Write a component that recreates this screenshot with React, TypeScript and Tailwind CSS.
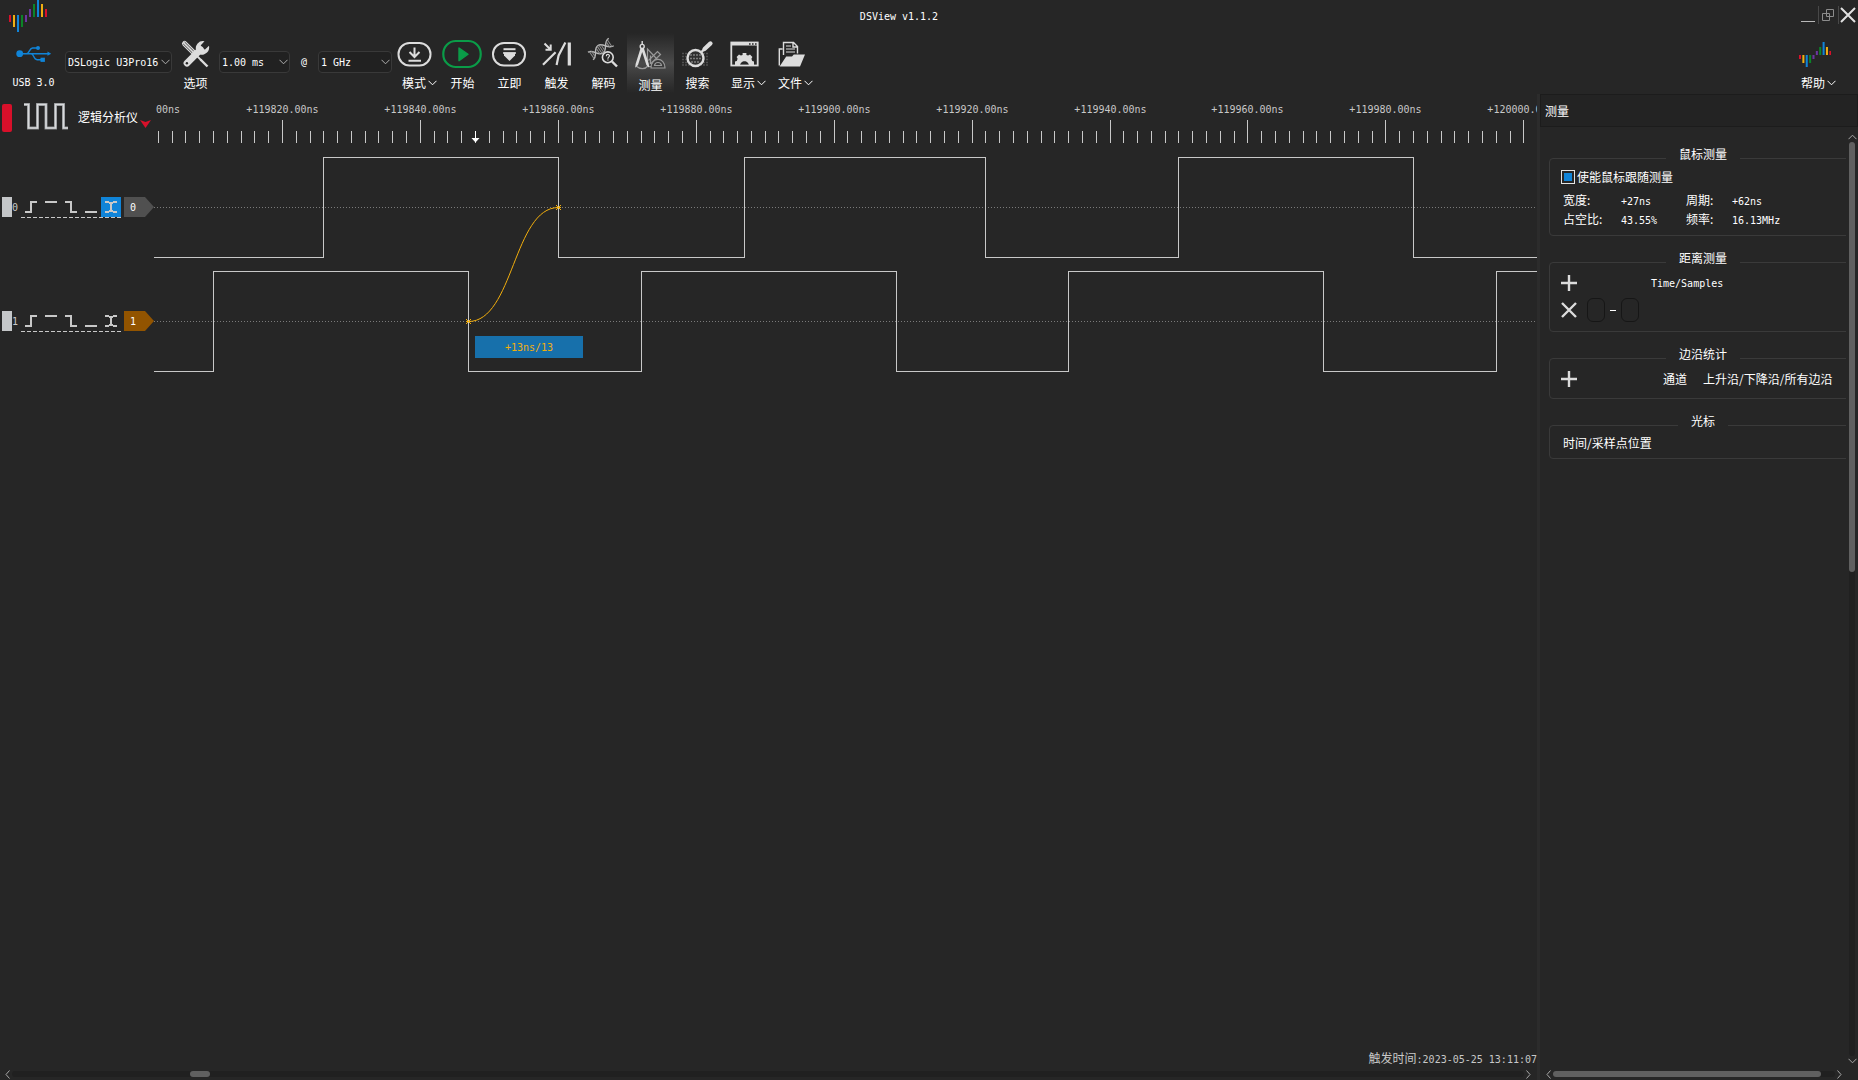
import { useState, type ReactNode } from 'react'

const mono = "font-['DejaVu_Sans_Mono','Noto_Sans_CJK_SC',monospace] text-[10px]"
const cjk = "font-['Noto_Sans_CJK_SC',sans-serif] text-xs"

// ---------- timing data ----------

const PX_PER_NS = 6.8966
const T0 = 119800
const ORIGIN = -9.5 // x of T0 on the canvas

const timeToX = (t: number) => Math.floor(ORIGIN + (t - T0) * PX_PER_NS) + 0.5

interface Channel {
  id: number
  edges: number[]
  top: number
  trigger: number | null
  tag: string
}

const channels: Channel[] = [
  { id: 0, edges: [119826, 119860, 119887, 119922, 119950, 119984], top: 63, trigger: 4, tag: 'fill-[#505050]' },
  { id: 1, edges: [119810, 119847, 119872, 119909, 119934, 119971, 119996], top: 177, trigger: null, tag: 'fill-[#925400]' },
]

const triggerModes = [
  { name: 'Rising edge', d: 'M4 15H10V5H16' },
  { name: 'High level', d: 'M4 5H16' },
  { name: 'Falling edge', d: 'M4 5H10V15H16' },
  { name: 'Low level', d: 'M4 15H16' },
  { name: 'Any edge', d: 'M4 5H8M12 5H16M4 15H8M12 15H16M8 6H12M8 14H12M10 5V15' },
]

function wavePath(channel: Channel) {
  const high = channel.top + 0.5
  const low = channel.top + 100.5
  let level = low
  let d = `M0 ${level}`
  for (const t of channel.edges) {
    level = level === low ? high : low
    d += `H${timeToX(t)}V${level}`
  }
  return d + 'H4000'
}

// ---------- icons ----------

function Logo({ width, height }: { width: number; height: number }) {
  const bars = [
    ['#d8102a', 15, 7], ['#f0ae12', 15, 12], ['#1084d8', 15, 17], ['#0b8428', 15, 12], ['#6c35a0', 15, 7],
    ['#6c35a0', 9, 8], ['#0b8428', 4, 13], ['#1084d8', 0, 17], ['#f0ae12', 4, 13], ['#d8102a', 9, 8],
  ] as const
  return (
    <svg width={width} height={height} viewBox="0 0 38 32" preserveAspectRatio="none" aria-hidden="true">
      {bars.map(([fill, y, h], i) => (
        <rect key={i} x={i * 4} y={y} width="2" height={h} fill={fill} />
      ))}
    </svg>
  )
}

// the toolbar copy is flatter: both halves meet on one base line
function SmallLogo() {
  const bars = [
    ['#d8102a', 13, 4], ['#f0ae12', 13, 8], ['#1084d8', 13, 12], ['#0b8428', 13, 8], ['#6c35a0', 13, 4],
    ['#6c35a0', 9, 4], ['#0b8428', 5, 8], ['#1084d8', 0, 13], ['#f0ae12', 5, 8], ['#d8102a', 9, 4],
  ] as const
  return (
    <svg width="32" height="25" viewBox="0 0 38 25" preserveAspectRatio="none" aria-hidden="true">
      {bars.map(([fill, y, h], i) => (
        <rect key={i} x={i * 4} y={y} width="2.4" height={h} fill={fill} />
      ))}
    </svg>
  )
}

function Chevron({ className = '' }: { className?: string }) {
  return (
    <svg width="9" height="6" viewBox="0 0 9 6" fill="none" stroke="currentColor" className={className} aria-hidden="true">
      <path d="M0.5 0.8L4.5 4.8L8.5 0.8" />
    </svg>
  )
}

function Icon({ children }: { children: ReactNode }) {
  return (
    <svg width="41" height="36" viewBox="0 0 41 36" fill="none" stroke="#dcdcdc" strokeWidth="2" className="shrink-0" aria-hidden="true">
      {children}
    </svg>
  )
}

const UsbIcon = () => (
  <Icon>
    <g stroke="#1084d8" strokeWidth="1.4">
      <path d="M7 17.7H35M13.5 17.7C16.5 17.7 16 12.5 19.5 12H25M18 17.7C21 17.7 20.5 23.7 24 23.7H28" />
      <g fill="#1084d8" stroke="none">
        <circle cx="6.7" cy="17.7" r="3.4" />
        <circle cx="25" cy="12" r="2" />
        <rect x="27.5" y="21.7" width="4.4" height="4.2" />
        <path d="M34.5 15.6L38.2 17.7L34.5 19.8Z" />
      </g>
    </g>
  </Icon>
)

const ToolsIcon = () => (
  <Icon>
    <path d="M9.6 7.6L18.2 16.2" strokeWidth="5.2" strokeLinecap="round" />
    <path d="M9.6 6L18.8 15.2M8.2 7.9L17.6 17.2" stroke="#262626" strokeWidth="0.8" />
    <path d="M18 16L26.5 24.5" strokeWidth="1.8" />
    <path d="M25.5 23.5L32.5 30.5" strokeWidth="2.4" />
    <path d="M12 27.2L25.5 13.7" strokeWidth="6.8" strokeLinecap="round" />
    <path d="M29.5 5.2A7.2 7.2 0 0 0 21.2 14.6L25.2 18.4A7.2 7.2 0 0 0 34 9.8L30 13.4L26.6 12.6L25.8 9.2Z" fill="#dcdcdc" stroke="none" />
    <circle cx="11.9" cy="27.3" r="1.2" fill="#262626" stroke="none" />
  </Icon>
)

const ModeIcon = () => (
  <Icon>
    <rect x="3.5" y="7" width="32" height="22.5" rx="11" />
    <path d="M19.5 11.5V20M14.5 16L19.5 21L24.5 16M13.5 24.7H26" />
  </Icon>
)

const StartIcon = () => (
  <Icon>
    <rect x="1.3" y="5" width="37.4" height="26" rx="12.5" stroke="#0a9c48" strokeWidth="2.2" />
    <path d="M17 12L26 18.3L17 24.7Z" fill="#0a9c48" stroke="#0a9c48" strokeLinejoin="round" strokeWidth="1.4" />
  </Icon>
)

const InstantIcon = () => (
  <Icon>
    <rect x="4" y="7" width="32" height="22.5" rx="11" />
    <path d="M14.5 13.2H26.5" />
    <path d="M15 16.5H26V19.5L20.5 25L15 19.5Z" fill="#dcdcdc" stroke="none" />
    <path d="M14 17H27" strokeWidth="1.6" />
  </Icon>
)

const TriggerIcon = () => (
  <Icon>
    <path d="M8.5 7.5L14 13M14.7 8.5V13.7H9.5" />
    <path d="M7 28.7L19.6 16.2M20.6 29L22.6 19.5L29.4 6.5" strokeWidth="2.2" />
    <path d="M33.3 6.5V29.5" strokeWidth="3.2" />
  </Icon>
)

const DecodeIcon = () => (
  <Icon>
    <g transform="translate(7.5 20) rotate(-34)" stroke="#b8b8b8" strokeWidth="1.4">
      <path d="M0 -4.5C6 -4.5 6 4.5 12 4.5S18 -4.5 25 -4.5M0 4.5C6 4.5 6 -4.5 12 -4.5S18 4.5 25 4.5" />
      <path d="M1.5 -4.5V4.5M3.5 -3.5V3.5M9 -3.5V3.5M11 -4.5V4.5M13 -4.5V4.5M15 -3.5V3.5M21 -3.5V3.5M23 -4V4" stroke="#8c8c8c" strokeWidth="1" />
    </g>
    <circle cx="24.8" cy="21.3" r="5.4" fill="#262626" strokeWidth="1.6" />
    <path d="M29 25.5L34 30.5" strokeWidth="2.4" />
    <path d="M23.3 20.3C23.3 17.7 26.6 18 26.4 20C26.2 21.2 24.9 21.3 24.9 22.7M24.9 23.6V24.6" strokeWidth="1.2" />
  </Icon>
)

const MeasureIcon = () => (
  <Icon>
    <g stroke="#9a9a9a" strokeWidth="1.2">
      <path d="M17.5 12L17.5 29.5H34L17.5 12ZM20.5 18.5V26.5H26" />
      <path d="M18.5 23.5L27.5 14.5L30.5 17.5L21 26.5" />
      <path d="M21 31C21 19.5 35 19.5 35 31ZM24.5 28.5C25 24.5 31 24.5 31.5 28.5Z" fill="#3a3a3a" />
      <path d="M6 29C10 32.5 15 32.5 18 29" />
    </g>
    <path d="M12.2 4V8" strokeWidth="1.4" />
    <circle cx="12.2" cy="9.4" r="2" strokeWidth="1.4" />
    <path d="M10.6 11L5.6 27L5.2 30.8L8 28L12.2 15L16.4 28L19.2 30.8L18.8 27L13.8 11Z" fill="#dcdcdc" stroke="none" />
  </Icon>
)

const SearchIcon = () => (
  <Icon>
    <path d="M5 17.5H32M5 20.5H32M5 23.5H32M5 26.5H32M5 29H32" stroke="#505050" strokeWidth="1.6" strokeDasharray="2 1" />
    <circle cx="18.5" cy="22" r="8" fill="#303030" strokeWidth="2.4" />
    <path d="M13 19H24M13 22.5H24M14 26H23" stroke="#7c7c7c" strokeWidth="1.6" strokeDasharray="2 1" />
    <path d="M24.5 16L28 12.5" strokeWidth="2.4" />
    <path d="M27.5 13L33.5 7.4" strokeWidth="4.2" strokeLinecap="round" />
  </Icon>
)

const DisplayIcon = () => (
  <Icon>
    <rect x="7.3" y="6.5" width="26.4" height="23" strokeWidth="1.8" />
    <path d="M7 7.8H34" strokeWidth="3.4" />
    <path d="M25 8H26.6M28 8H29.6M31 8H32.6" stroke="#262626" strokeWidth="1.6" />
    <path d="M11 30V25.5L12.8 25L13.6 22.8L12.6 21L15 18.6L16.9 19.6L18.6 19V17H22.4V19L24.1 19.6L26 18.6L28.4 21L27.4 22.8L28.2 25L30 25.5V30H25C25 23.5 16 23.5 16 30Z" fill="#dcdcdc" stroke="none" />
  </Icon>
)

const FileIcon = () => (
  <Icon>
    <path d="M11.5 13H8.3V29.5M12.5 19V6.5H22.5L26.5 10.5V17.5M22 6.8V11H26.3" strokeWidth="1.4" />
    <path d="M15 10H20M15 13H24M15 16H24" strokeWidth="1.2" />
    <path d="M8.6 30.5L15.2 20.5H21L22.8 18.5H34L29 30.5Z" fill="#dcdcdc" stroke="none" />
  </Icon>
)

// ---------- toolbar ----------

interface ToolProps {
  label: string
  icon: ReactNode
  menu?: boolean
  active?: boolean
}

function ToolButton({ label, icon, menu, active }: ToolProps) {
  return (
    <button
      type="button"
      aria-pressed={active}
      className={`flex h-15 w-[47px] shrink-0 flex-col items-center ${
        active ? 'gap-1 bg-linear-to-b from-[#262626] via-[#4a4a4a] to-[#262626] pt-1' : 'gap-[3px] pt-[3px]'
      }`}
    >
      {icon}
      <span className={`flex h-4 items-center gap-0.5 leading-4 whitespace-nowrap ${cjk} ${menu ? 'pl-2' : ''}`}>
        {label}
        {menu && <Chevron />}
      </span>
    </button>
  )
}

function Picker({ label, options, className }: { label: string; options: string[]; className: string }) {
  return (
    <div className={`relative mt-[18px] shrink-0 ${className}`}>
      <select
        aria-label={label}
        className={`block h-[22px] w-full appearance-none rounded-sm border border-[#393939] bg-[#212121] pl-0.5 text-white ${mono}`}
      >
        {options.map((option) => (
          <option key={option}>{option}</option>
        ))}
      </select>
      <Chevron className="pointer-events-none absolute top-2 right-0.5 text-[#b0b0b0]" />
    </div>
  )
}

function TitleBar() {
  return (
    <header className="flex h-8 shrink-0">
      <div className="w-12 pl-[9px]">
        <Logo width={38} height={32} />
      </div>
      <h1 className={`flex-1 text-center leading-[34px] ${mono}`}>DSView v1.1.2</h1>
      <div className="flex w-[108px] justify-end">
        <button type="button" aria-label="Minimize" className="flex h-8 w-[17px] pt-[21px]">
          <span className="h-px w-3.5 bg-[#b8b8b8]" />
        </button>
        <span className="mt-1.5 h-[18px] w-px bg-[#484848]" />
        <button type="button" aria-label="Restore" className="flex h-8 w-[19px] pt-[9px] pl-[3px]">
          <svg width="12" height="12" fill="none" stroke="#8c8c8c" aria-hidden="true">
            <path d="M4.5 0.5H11.5V7.5H4.5ZM0.5 4.5H7.5V11.5H0.5Z" />
          </svg>
        </button>
        <span className="mt-1.5 h-[18px] w-px bg-[#484848]" />
        <button type="button" aria-label="Close" className="flex h-8 w-[19px] pt-[7px] pl-px">
          <svg width="16" height="16" fill="none" stroke="#e0e0e0" strokeWidth="2" aria-hidden="true">
            <path d="M1 1L15 15M15 1L1 15" />
          </svg>
        </button>
      </div>
    </header>
  )
}

function Toolbar() {
  return (
    <nav className="flex h-[62px] shrink-0 items-start pt-px">
      <button type="button" className="flex h-15 w-[65px] shrink-0 flex-col items-center gap-[3px] pt-[3px] pl-0.5">
        <UsbIcon />
        <span className={`h-4 leading-4 ${mono}`}>USB 3.0</span>
      </button>
      <Picker label="Device" options={['DSLogic U3Pro16']} className="w-[107px]" />
      <ToolButton label="选项" icon={<ToolsIcon />} />
      <Picker label="Duration" options={['1.00 ms']} className="w-[71px]" />
      <span className={`mt-[18px] w-7 shrink-0 text-center leading-[22px] ${mono}`}>@</span>
      <Picker label="Sample rate" options={['1 GHz']} className="w-[74px]" />
      <ToolButton label="模式" icon={<ModeIcon />} menu />
      <ToolButton label="开始" icon={<StartIcon />} />
      <ToolButton label="立即" icon={<InstantIcon />} />
      <ToolButton label="触发" icon={<TriggerIcon />} />
      <ToolButton label="解码" icon={<DecodeIcon />} />
      <ToolButton label="测量" icon={<MeasureIcon />} active />
      <ToolButton label="搜索" icon={<SearchIcon />} />
      <ToolButton label="显示" icon={<DisplayIcon />} menu />
      <ToolButton label="文件" icon={<FileIcon />} menu />
      <div className="mr-5 ml-auto">
        <ToolButton
          label="帮助"
          icon={
            <span className="flex h-9 items-center">
              <SmallLogo />
            </span>
          }
          menu
        />
      </div>
    </nav>
  )
}

// ---------- waveform view ----------

function ChannelRow({ channel }: { channel: Channel }) {
  const [trigger, setTrigger] = useState(channel.trigger)

  return (
    <div className="flex h-[114px] items-center text-[#c8c8c8]">
      <span className="ml-0.5 h-5 w-2.5 bg-[#c4c6c8]" />
      <span className={`w-[9px] ${mono}`}>{channel.id}</span>
      <div className="relative flex">
        {triggerModes.map((mode, i) => (
          <button
            key={mode.name}
            type="button"
            aria-label={mode.name}
            aria-pressed={trigger === i}
            onClick={() => setTrigger(trigger === i ? null : i)}
            className={trigger === i ? 'bg-[#1084d8]' : ''}
          >
            <svg width="20" height="20" fill="none" stroke="currentColor" strokeWidth="2" aria-hidden="true">
              <path d={mode.d} />
            </svg>
          </button>
        ))}
        <svg className="absolute top-full left-0 h-px w-full" aria-hidden="true">
          <path d="M0 0.5H100" stroke="#c8c8c8" strokeDasharray="4 2" />
        </svg>
      </div>
      <svg width="30" height="20" className="ml-[3px]">
        <path d="M0 0H21L30 10L21 20H0Z" className={channel.tag} />
        <text x="9" y="14" textAnchor="middle" className={`fill-white ${mono}`}>
          {channel.id}
        </text>
      </svg>
    </div>
  )
}

function DeviceColumn() {
  return (
    <div className="w-[154px] shrink-0">
      <div className="flex h-14 items-start">
        <span className="mt-2.5 ml-0.5 h-7 w-2.5 rounded-xs bg-[#d8102a]" />
        <svg width="44" height="27" className="mt-[9px] ml-3" fill="none" aria-hidden="true">
          <path d="M0 1.5H4.5V25H13.5V1.5H22V25H31.5V1.5H39.5V25H44" stroke="#8c8e90" strokeWidth="3" />
          <path d="M0 1.5H4.5V25H13.5V1.5H22V25H31.5V1.5H39.5V25H44" stroke="#d8dadc" strokeWidth="1.6" />
        </svg>
        <span className={`mt-[15px] ml-2.5 leading-4 whitespace-nowrap ${cjk}`}>逻辑分析仪</span>
        <svg width="11" height="8" className="mt-[26px] ml-0.5" fill="#d8102a" aria-hidden="true">
          <path d="M0 0L5.5 2L11 0L5.5 8Z" />
        </svg>
      </div>
      {channels.map((channel) => (
        <ChannelRow key={channel.id} channel={channel} />
      ))}
    </div>
  )
}

function WaveCanvas() {
  const ticks = Array.from({ length: 160 }, (_, i) => T0 + 2 + i * 2)
  const labels = Array.from({ length: 10 }, (_, i) => T0 + 20 + i * 20)
  const from = { x: timeToX(119847), y: 227.5 }
  const to = { x: timeToX(119860), y: 113.5 }
  const mid = (from.x + to.x) / 2
  const cross = (x: number, y: number) => `M${x - 2.5} ${y - 2.5}l5 5M${x + 2.5} ${y - 2.5}l-5 5M${x - 2.5} ${y}h5`
  const labelClass = `fill-[#c8c8c8] ${mono}`

  return (
    <svg className="h-full min-w-0 flex-1" fill="none" stroke="#c8c8c8" aria-label="Waveforms">
      {ticks.map((t) => (
        <path key={t} d={`M${timeToX(t)} ${t % 20 === 0 ? 26 : 37}V49`} />
      ))}
      {/* only the tail of the first label fits */}
      <text x="2" y="19" stroke="none" className={labelClass}>
        00ns
      </text>
      {labels.map((t) => (
        <text key={t} x={timeToX(t)} y="19" textAnchor="middle" stroke="none" className={labelClass}>
          +{t}.00ns
        </text>
      ))}
      {/* hover cursor on the ruler */}
      <path d="M321.5 37V45" stroke="#fff" />
      <path d="M317.5 44H325.5L321.5 48.5Z" fill="#fff" stroke="none" />

      {channels.map((channel) => (
        <g key={channel.id} shapeRendering="crispEdges">
          <path d={`M0 ${channel.top + 50.5}H4000`} stroke="#7a7a7a" strokeDasharray="1 2" />
          <path d={wavePath(channel)} />
        </g>
      ))}

      <g stroke="#f2ae0d">
        <path d={`M${from.x} ${from.y}C${mid} ${from.y} ${mid} ${to.y} ${to.x} ${to.y}`} />
        <path d={cross(from.x, from.y)} />
        <path d={cross(to.x, to.y)} />
      </g>
      <rect x="321" y="242" width="108" height="22" fill="#1770ab" stroke="none" />
      <text x="375" y="257" textAnchor="middle" stroke="none" className={`fill-[#f2ae0d] ${mono}`}>
        +13ns/13
      </text>
    </svg>
  )
}

function HorizontalScroll({ thumb }: { thumb: string }) {
  return (
    <div className="flex h-3 shrink-0 items-center gap-0.5 text-[#a8a8a8]">
      <Arrow d="M4.5 0.5L1 4.5L4.5 8.5" />
      <div className="h-1.5 flex-1 rounded-full bg-[#202020]">
        <div className={`h-1.5 rounded-full bg-[#606060] ${thumb}`} />
      </div>
      <Arrow d="M0.5 0.5L4 4.5L0.5 8.5" />
    </div>
  )
}

function Arrow({ d }: { d: string }) {
  return (
    <svg width="5" height="9" fill="none" stroke="currentColor" aria-hidden="true">
      <path d={d} />
    </svg>
  )
}

// ---------- measure panel ----------

function Group({ title, className = '', children }: { title: string; className?: string; children: ReactNode }) {
  return (
    <fieldset className={`w-[308px] rounded-sm border border-[#3a3a3a] px-[11px] ${className}`}>
      <legend className={`mx-auto px-[13px] pb-2 leading-4 ${cjk}`}>{title}</legend>
      {children}
    </fieldset>
  )
}

function IconButton({ label, d }: { label: string; d: string }) {
  return (
    <button type="button" aria-label={label} className="mr-2.5">
      <svg width="16" height="16" fill="none" stroke="#dcdcdc" strokeWidth="2.4" aria-hidden="true">
        <path d={d} />
      </svg>
    </button>
  )
}

const PLUS = 'M0 8H16M8 0V16'
const CROSS = 'M1 1L15 15M15 1L1 15'

function MeasurePanel() {
  const [follow, setFollow] = useState(true)
  const slot = 'h-6 w-[18px] rounded-md border border-[#161616]'

  return (
    <aside className="flex w-[318px] shrink-0 flex-col">
      <h2 className={`h-[33px] shrink-0 border border-[#1c1c1c] bg-[#232323] pl-1 leading-8 ${cjk}`}>测量</h2>
      <div className="flex min-h-0 flex-1">
        <div className="flex min-w-0 flex-1 flex-col gap-3.5 overflow-hidden pt-[19px] pl-[9px]">
          <Group title="鼠标测量" className="pb-[5px]">
            <label className={`flex h-3.5 items-center gap-0.5 ${cjk}`}>
              <input
                type="checkbox"
                checked={follow}
                onChange={(e) => setFollow(e.target.checked)}
                className="size-3.5 appearance-none border border-[#e4e4e4] bg-clip-content p-0.5 checked:bg-[#1084d8]"
              />
              使能鼠标跟随测量
            </label>
            <dl className="mt-2 grid grid-cols-[58px_65px_46px_1fr] pl-0.5 leading-[19px]">
              <dt className={cjk}>宽度:</dt>
              <dd className={mono}>+27ns</dd>
              <dt className={cjk}>周期:</dt>
              <dd className={mono}>+62ns</dd>
              <dt className={cjk}>占空比:</dt>
              <dd className={mono}>43.55%</dd>
              <dt className={cjk}>频率:</dt>
              <dd className={mono}>16.13MHz</dd>
            </dl>
          </Group>

          <Group title="距离测量" className="pb-[9px]">
            <div className="flex h-[18px] items-center">
              <IconButton label="Add distance" d={PLUS} />
              <span className={`ml-16 ${mono}`}>Time/Samples</span>
            </div>
            <div className="mt-1.5 flex h-6 items-center">
              <IconButton label="Remove distance" d={CROSS} />
              <button type="button" aria-label="Start cursor" className={slot} />
              <span className="mx-[5px] h-px w-1.5 bg-white" />
              <button type="button" aria-label="End cursor" className={slot} />
            </div>
          </Group>

          <Group title="边沿统计" className="pb-2.5">
            <div className={`flex h-[18px] items-center ${cjk}`}>
              <IconButton label="Add edge count" d={PLUS} />
              <span className="ml-[76px]">通道</span>
              <span className="ml-4 whitespace-nowrap">上升沿/下降沿/所有边沿</span>
            </div>
          </Group>

          <Group title="光标" className="pb-[9px]">
            <p className={`pl-0.5 leading-3 ${cjk}`}>时间/采样点位置</p>
          </Group>
        </div>

        <div className="flex w-3 shrink-0 flex-col items-center gap-0.5 pt-[7px] pb-1 text-[#a8a8a8]">
          <Chevron className="shrink-0 rotate-180" />
          <div className="w-1.5 flex-1 rounded-full bg-[#202020]">
            <div className="h-[47%] rounded-full bg-[#606060]" />
          </div>
          <Chevron className="shrink-0" />
        </div>
      </div>
      <div className="mr-4 ml-1.5">
        <HorizontalScroll thumb="w-[95%]" />
      </div>
    </aside>
  )
}

export default function App() {
  return (
    <div className="flex h-screen flex-col overflow-hidden bg-[#262626] text-white">
      <TitleBar />
      <Toolbar />
      <main className="flex min-h-0 flex-1">
        <section className="flex min-w-0 flex-1 flex-col">
          <div className="flex min-h-0 flex-1">
            <DeviceColumn />
            <WaveCanvas />
          </div>
          <p className="h-5 shrink-0 text-right leading-[18px] text-[#c8c8c8]">
            <span className={cjk}>触发时间</span>
            <span className={mono}>:2023-05-25 13:11:07</span>
          </p>
          <div className="mr-1.5 ml-[5px]">
            <HorizontalScroll thumb="ml-[178px] w-5" />
          </div>
        </section>
        <div className="w-[3px] shrink-0 bg-[#2c2c2c]" />
        <MeasurePanel />
      </main>
    </div>
  )
}
